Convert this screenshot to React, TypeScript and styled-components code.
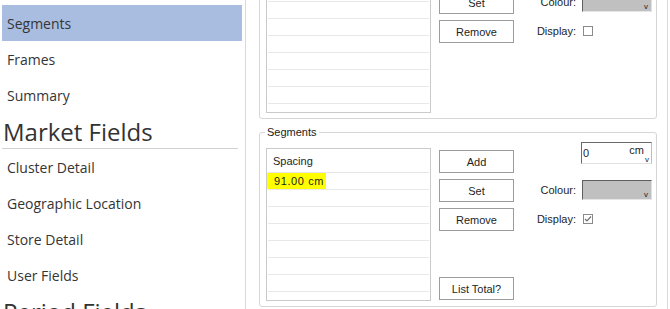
import React from "react";
import styled, { createGlobalStyle } from "styled-components";

const GlobalStyle = createGlobalStyle`
  html, body { margin: 0; padding: 0; background: #ffffff; }
  body { width: 670px; height: 309px; overflow: hidden; }
  #root { width: 670px; height: 309px; }
  *, *::before, *::after { box-sizing: border-box; }
`;

const Page = styled.div`
  display: flex;
  width: 670px;
  height: 309px;
  overflow: hidden;
  background: #ffffff;
`;

const Sidebar = styled.nav`
  flex: 0 0 246px;
  display: flex;
  flex-direction: column;
  border-right: 1px solid #d9d9d9;
  padding: 5px 3px 0 2px;
  font-family: "Open Sans", "Noto Sans", sans-serif;
  color: #353535;
`;

const NavItem = styled.div<{ $active?: boolean }>`
  flex: 0 0 36px;
  display: flex;
  align-items: center;
  padding-left: 5px;
  font-size: 14px;
  background: ${(p) => (p.$active ? "#a8bde0" : "transparent")};
`;

const SectionHeading = styled.div`
  flex: 0 0 36px;
  padding: 3px 0 0 1px;
  margin-right: 4px;
  font-size: 24px;
  line-height: 32px;
  color: #333333;
  border-bottom: 1px solid #d2d2d2;
  white-space: nowrap;
`;

const Main = styled.main`
  flex: 1;
  display: flex;
  padding-left: 13px;
  font-family: "Liberation Sans", Arial, sans-serif;
  font-size: 11px;
  color: #1e1e1e;
`;

const GroupColumn = styled.div`
  flex: 0 0 398px;
  display: flex;
  flex-direction: column;
`;

const NextPanelEdge = styled.div`
  flex: 1;
  margin-left: 10px;
  border-left: 1px solid #dadada;
`;

const GroupBox = styled.fieldset<{ $top: number; $legend: boolean }>`
  margin: ${(p) => p.$top}px 0 0 0;
  padding: ${(p) => (p.$legend ? "3px" : "9px")} 4px 5px 6px;
  border: 1px solid #d6d6d6;
  border-radius: 3px;
  min-width: 0;
`;

const Legend = styled.legend`
  margin-left: -1px;
  padding: 0 2px;
  font-size: 11px;
  line-height: 13px;
  color: #222222;
`;

const GroupBody = styled.div`
  display: flex;
  height: 159px;
`;

const ListBox = styled.div`
  flex: 0 0 165px;
  height: 153px;
  margin-top: 6px;
  display: flex;
  flex-direction: column;
  border: 1px solid #cacaca;
  background: #ffffff;
  overflow: hidden;
`;

const ListHeader = styled.div`
  flex: 0 0 24px;
  display: flex;
  align-items: center;
  padding-left: 5px;
  margin: 0 1px;
  border-bottom: 1px solid #e6e6e6;
`;

const ListRow = styled.div`
  flex: 0 0 17px;
  display: flex;
  align-items: flex-start;
  margin: 0 1px;
  border-bottom: 1px solid #e8e8e8;
`;

const HighlightCell = styled.span`
  display: inline-flex;
  align-items: center;
  height: 16px;
  margin-left: -1px;
  padding: 0 2px 0 7px;
  background: #ffff00;
  letter-spacing: 0.6px;
`;

const ButtonColumn = styled.div`
  flex: 0 0 75px;
  display: flex;
  flex-direction: column;
  gap: 6px;
  margin-left: 8px;
  padding: 8px 0 1px 0;
`;

const ActionButton = styled.button<{ $pushDown?: boolean }>`
  flex: 0 0 23px;
  width: 75px;
  margin-top: ${(p) => (p.$pushDown ? "auto" : "0")};
  padding: 0;
  border: 1px solid #9c9c9c;
  border-radius: 0;
  background: #ffffff;
  font-family: "Liberation Sans", Arial, sans-serif;
  font-size: 11px;
  color: #1e1e1e;
`;

const FormColumn = styled.div`
  flex: 1;
  display: flex;
  flex-direction: column;
`;

const FieldRow = styled.div<{ $top: number; $height: number }>`
  display: grid;
  grid-template-columns: 1fr 71px;
  column-gap: 5px;
  align-items: center;
  height: ${(p) => p.$height}px;
  margin-top: ${(p) => p.$top}px;
`;

const FieldLabel = styled.span`
  text-align: right;
  white-space: nowrap;
`;

const NumericBox = styled.div`
  grid-column: 2;
  height: 22px;
  display: flex;
  align-items: stretch;
  background: #ffffff;
  border: 1px solid;
  border-color: #6a6a6a #bdbdbd #e2e2e2 #6a6a6a;
`;

const NumericValue = styled.span`
  flex: 1;
  display: flex;
  align-items: center;
  padding-left: 1px;
`;

const UnitPicker = styled.span`
  display: flex;
  flex-direction: column;
  align-items: flex-end;
  padding-right: 2px;
`;

const UnitText = styled.span`
  margin-top: 1px;
  padding-right: 5px;
  line-height: 12px;
`;

const Caret = styled.span`
  font-size: 8px;
  line-height: 7px;
`;

const ColourBox = styled.div`
  height: 20px;
  width: 70px;
  margin-left: 1px;
  display: flex;
  align-items: flex-end;
  justify-content: flex-end;
  padding: 0 3px 1px 0;
  background: #c0c0c0;
  border: 1px solid;
  border-color: #5f5f5f #e0e0e0 #e6e6e6 #5f5f5f;
`;

const CheckBox = styled.span`
  width: 10px;
  height: 10px;
  margin-left: 2px;
  display: flex;
  align-items: center;
  justify-content: center;
  border: 1px solid #8a8a8a;
  background: #ffffff;
`;

type GroupProps = {
  legend?: string;
  top: number;
  header: string;
  rows: string[];
  checked: boolean;
  showTotal: boolean;
};

function SegmentGroup({ legend, top, header, rows, checked, showTotal }: GroupProps) {
  const rowCells = Array.from({ length: 8 }, (_, i) => rows[i] ?? "");
  return (
    <GroupBox $top={top} $legend={!!legend}>
      {legend && <Legend>{legend}</Legend>}
      <GroupBody>
        <ListBox>
          <ListHeader>{header}</ListHeader>
          {rowCells.map((cell, i) => (
            <ListRow key={i}>{cell && <HighlightCell>{cell}</HighlightCell>}</ListRow>
          ))}
        </ListBox>
        <ButtonColumn>
          <ActionButton>Add</ActionButton>
          <ActionButton>Set</ActionButton>
          <ActionButton>Remove</ActionButton>
          {showTotal && <ActionButton $pushDown>List Total?</ActionButton>}
        </ButtonColumn>
        <FormColumn>
          <FieldRow $top={0} $height={22}>
            <NumericBox>
              <NumericValue>0</NumericValue>
              <UnitPicker>
                <UnitText>cm</UnitText>
                <Caret>v</Caret>
              </UnitPicker>
            </NumericBox>
          </FieldRow>
          <FieldRow $top={16} $height={20}>
            <FieldLabel>Colour:</FieldLabel>
            <ColourBox>
              <Caret>v</Caret>
            </ColourBox>
          </FieldRow>
          <FieldRow $top={12} $height={14}>
            <FieldLabel>Display:</FieldLabel>
            <CheckBox>
              {checked && (
                <svg width="8" height="8" viewBox="0 0 8 8">
                  <polyline points="1,4 3,6 7,1.5" fill="none" stroke="#6f6f6f" strokeWidth="1.2" />
                </svg>
              )}
            </CheckBox>
          </FieldRow>
        </FormColumn>
      </GroupBody>
    </GroupBox>
  );
}

export default function App() {
  return (
    <>
      <GlobalStyle />
      <Page>
        <Sidebar>
          <NavItem $active>Segments</NavItem>
          <NavItem>Frames</NavItem>
          <NavItem>Summary</NavItem>
          <SectionHeading>Market Fields</SectionHeading>
          <NavItem>Cluster Detail</NavItem>
          <NavItem>Geographic Location</NavItem>
          <NavItem>Store Detail</NavItem>
          <NavItem>User Fields</NavItem>
          <SectionHeading>Period Fields</SectionHeading>
        </Sidebar>
        <Main>
          <GroupColumn>
            <SegmentGroup top={-56} header="" rows={[]} checked={false} showTotal={false} />
            <SegmentGroup
              legend="Segments"
              top={7}
              header="Spacing"
              rows={["91.00 cm"]}
              checked
              showTotal
            />
          </GroupColumn>
          <NextPanelEdge />
        </Main>
      </Page>
    </>
  );
}
